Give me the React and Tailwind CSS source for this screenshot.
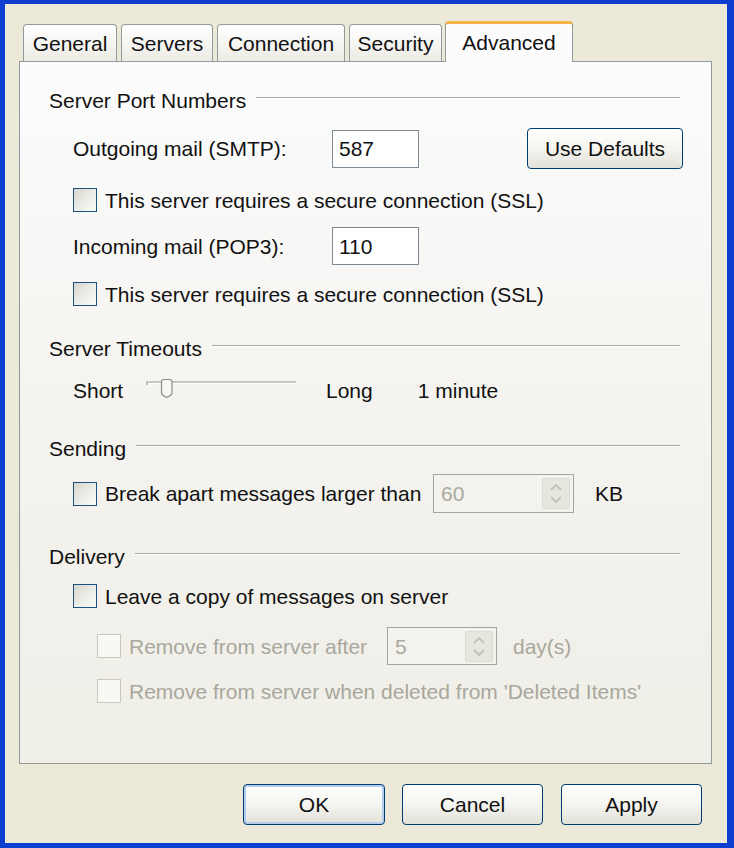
import React from "react";

const Check = ({ disabled }) =>
  disabled ? (
    <div className="w-[24px] h-[24px] shrink-0 border border-[#cac8bb] bg-[#f8f8f4]" />
  ) : (
    <div className="w-[24px] h-[24px] shrink-0 border border-[#1c5180] bg-gradient-to-br from-[#d6d6ce] via-[#ecece6] to-[#fbfbf9]" />
  );

const Header = ({ children, className }) => (
  <div className={"flex items-center h-[24px] pl-[29px] pr-[31px] " + className}>
    <span className="whitespace-nowrap">{children}</span>
    <div className="flex-1 ml-[10px] mb-[5px] h-[2px] border-t border-[#a9a79c] border-b border-b-white" />
  </div>
);

const Spin = ({ value, w }) => (
  <div className={"h-full border border-[#a5a49f] bg-[#f3f2ec] flex items-center pl-[7px] pr-[3px] " + w}>
    <span className="flex-1 text-[#a9a9a2]">{value}</span>
    <div className="w-[28px] h-[31px] bg-[#e7e6df] border border-[#dddcd4] rounded-[2px] flex flex-col items-center justify-center gap-[5px]">
      <svg width="12" height="7" viewBox="0 0 12 7">
        <path d="M1 6 L6 1 L11 6" fill="none" stroke="#c4c3bb" strokeWidth="2" />
      </svg>
      <svg width="12" height="7" viewBox="0 0 12 7">
        <path d="M1 1 L6 6 L11 1" fill="none" stroke="#c4c3bb" strokeWidth="2" />
      </svg>
    </div>
  </div>
);

const Tab = ({ w, children, ml }) => (
  <div
    className={
      "h-[37px] border border-b-0 border-[#919b9c] rounded-t-[4px] bg-gradient-to-b from-[#ffffff] to-[#ecebe5] flex items-center justify-center " +
      w +
      " " +
      ml
    }
  >
    {children}
  </div>
);

export default function App() {
  return (
    <div className="w-[734px] h-[848px] bg-[#0e3ed0] pt-[4px] pl-[5px] pr-[7px] pb-[5px] font-['Liberation_Sans',Arial,sans-serif] text-[21px] text-[#111] leading-none">
      <div className="w-full h-full bg-[#ece9d8] flex flex-col pt-[17px] pl-[14px] pr-[15px]">
        {/* Tabs */}
        <div className="flex items-end h-[40px] pl-[4px]">
          <Tab w="w-[94px]" ml="">General</Tab>
          <Tab w="w-[92px]" ml="ml-[4px]">Servers</Tab>
          <Tab w="w-[128px]" ml="ml-[4px]">Connection</Tab>
          <Tab w="w-[93px]" ml="ml-[4px]">Security</Tab>
          <div className="relative z-10 -mb-px ml-[3px] w-[128px] h-[41px] border border-b-0 border-[#919b9c] border-t-[3px] border-t-[#f3b54a] rounded-t-[4px] bg-[#fcfcfd] flex items-center justify-center pb-[2px]">
            Advanced
          </div>
        </div>

        {/* Panel */}
        <div className="h-[703px] border border-[#919b9c] bg-gradient-to-b from-[#fcfcfd] via-[#f4f3ef] to-[#efeee7] flex flex-col">
          <Header className="mt-[26px]">Server Port Numbers</Header>

          <div className="flex items-center h-[41px] mt-[16px] pl-[53px]">
            <span className="w-[259px]">Outgoing mail (SMTP):</span>
            <div className="w-[87px] h-[38px] border border-[#7c8a96] bg-white flex items-center pl-[6px]">587</div>
            <button className="ml-[108px] w-[156px] h-[41px] rounded-[4px] border border-[#003c74] bg-gradient-to-b from-[#ffffff] via-[#f4f4f0] to-[#e2e1d9] text-[21px] text-[#111]">
              Use Defaults
            </button>
          </div>

          <div className="flex items-center h-[26px] mt-[18px] pl-[53px] gap-[8px]">
            <Check />
            <span>This server requires a secure connection (SSL)</span>
          </div>

          <div className="flex items-center h-[38px] mt-[14px] pl-[53px]">
            <span className="w-[259px]">Incoming mail (POP3):</span>
            <div className="w-[87px] h-[38px] border border-[#7c8a96] bg-white flex items-center pl-[6px]">110</div>
          </div>

          <div className="flex items-center h-[26px] mt-[16px] pl-[53px] gap-[8px]">
            <Check />
            <span>This server requires a secure connection (SSL)</span>
          </div>

          <Header className="mt-[29px]">Server Timeouts</Header>

          <div className="flex items-center h-[30px] mt-[15px] pl-[53px]">
            <span className="w-[73px]">Short</span>
            <svg width="151" height="30" viewBox="0 0 151 30" className="self-start">
              <path d="M1 10 V7 H150" fill="none" stroke="#9a9a94" strokeWidth="1.2" />
              <path d="M2 8.5 H150" fill="none" stroke="#ffffff" strokeWidth="1" />
              <path
                d="M15.5 7 Q15.5 4.5 18 4.5 H23.5 Q26 4.5 26 7 V18 Q26 20 20.75 22.5 Q15.5 20 15.5 18 Z"
                fill="#f7f7f4"
                stroke="#8d8d88"
                strokeWidth="1.2"
              />
            </svg>
            <span className="ml-[29px]">Long</span>
            <span className="ml-[45px]">1 minute</span>
          </div>

          <Header className="mt-[31px]">Sending</Header>

          <div className="flex items-center h-[39px] mt-[14px] pl-[53px]">
            <Check />
            <span className="ml-[8px] w-[328px]">Break apart messages larger than</span>
            <Spin value="60" w="w-[141px]" />
            <span className="ml-[21px]">KB</span>
          </div>

          <Header className="mt-[31px]">Delivery</Header>

          <div className="flex items-center h-[26px] mt-[15px] pl-[53px] gap-[8px]">
            <Check />
            <span>Leave a copy of messages on server</span>
          </div>

          <div className="flex items-center h-[38px] mt-[18px] pl-[77px] text-[#a9a79c]">
            <Check disabled />
            <span className="ml-[8px] w-[258px]">Remove from server after</span>
            <Spin value="5" w="w-[110px]" />
            <span className="ml-[16px]">day(s)</span>
          </div>

          <div className="flex items-center h-[26px] mt-[13px] pl-[77px] gap-[8px] text-[#a9a79c]">
            <Check disabled />
            <span>Remove from server when deleted from 'Deleted Items'</span>
          </div>
        </div>

        {/* Buttons */}
        <div className="flex justify-end mt-[20px] pr-[10px] gap-[17px]">
          <button className="w-[142px] h-[41px] rounded-[4px] border border-[#003c74] bg-gradient-to-b from-[#ffffff] via-[#f4f4f0] to-[#e2e1d9] shadow-[inset_0_0_0_2px_#b3cdf0] text-[21px] text-[#111]">
            OK
          </button>
          <button className="w-[141px] h-[41px] rounded-[4px] border border-[#003c74] bg-gradient-to-b from-[#ffffff] via-[#f4f4f0] to-[#e2e1d9] text-[21px] text-[#111]">
            Cancel
          </button>
          <button className="ml-[1px] w-[141px] h-[41px] rounded-[4px] border border-[#003c74] bg-gradient-to-b from-[#ffffff] via-[#f4f4f0] to-[#e2e1d9] text-[21px] text-[#111]">
            Apply
          </button>
        </div>
      </div>
    </div>
  );
}
